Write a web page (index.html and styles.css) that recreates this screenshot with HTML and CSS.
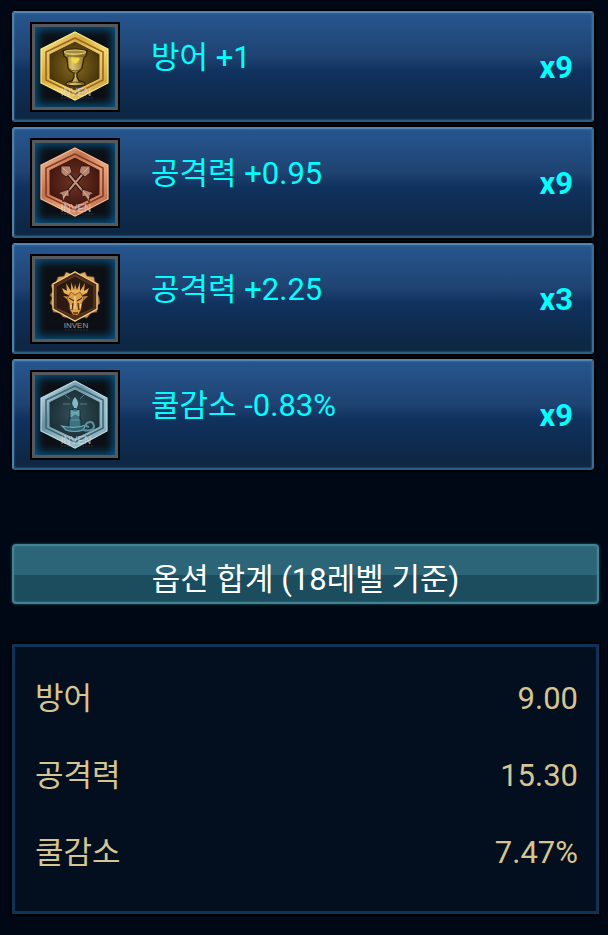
FILE: index.html
```
<!DOCTYPE html>
<html lang="ko">
<head>
    <meta charset="UTF-8">
    <meta name="viewport" content="width=device-width, initial-scale=1.0">
    <title>옵션 합계</title>
    <link rel="stylesheet" href="styles.css">
</head>
<body>

    <!-- shared gradients for the medals -->
    <svg class="defs" width="0" height="0" aria-hidden="true">
        <defs>
            <linearGradient id="gold" x1="0" y1="0" x2="1" y2="1">
                <stop offset="0" stop-color="#fff6a0"/>
                <stop offset=".35" stop-color="#d9a83c"/>
                <stop offset=".6" stop-color="#f3d86e"/>
                <stop offset="1" stop-color="#c08a2c"/>
            </linearGradient>
            <radialGradient id="gold-in">
                <stop offset="0" stop-color="#8a6a1c"/>
                <stop offset="1" stop-color="#4a360c"/>
            </radialGradient>
            <linearGradient id="cup" x1="0" x2="1">
                <stop offset="0" stop-color="#8f7426"/>
                <stop offset=".4" stop-color="#dcc56c"/>
                <stop offset="1" stop-color="#80641c"/>
            </linearGradient>
            <linearGradient id="copper" x1="0" y1="0" x2="1" y2="1">
                <stop offset="0" stop-color="#fbd0a4"/>
                <stop offset=".35" stop-color="#c4704c"/>
                <stop offset=".6" stop-color="#eba67c"/>
                <stop offset="1" stop-color="#b0583a"/>
            </linearGradient>
            <radialGradient id="copper-in">
                <stop offset="0" stop-color="#6e3424"/>
                <stop offset="1" stop-color="#44180f"/>
            </radialGradient>
            <linearGradient id="bronze" x1="0" y1="0" x2="0" y2="1">
                <stop offset="0" stop-color="#ecb56c"/>
                <stop offset=".5" stop-color="#a87540"/>
                <stop offset="1" stop-color="#c88a60"/>
            </linearGradient>
            <linearGradient id="dragon" x1="0" y1="0" x2="0" y2="1">
                <stop offset="0" stop-color="#b87828"/>
                <stop offset=".5" stop-color="#f0b758"/>
                <stop offset="1" stop-color="#b07438"/>
            </linearGradient>
            <linearGradient id="silver" x1="0" y1="0" x2="1" y2="1">
                <stop offset="0" stop-color="#d8f2f8"/>
                <stop offset=".35" stop-color="#6890a0"/>
                <stop offset=".6" stop-color="#a0c4d0"/>
                <stop offset="1" stop-color="#7ca4b4"/>
            </linearGradient>
            <radialGradient id="silver-in">
                <stop offset="0" stop-color="#35505a"/>
                <stop offset="1" stop-color="#1c3038"/>
            </radialGradient>
        </defs>
    </svg>

    <div class="container">
        <ul class="runes">
            <li class="rune">
                <div class="rune-img">
                    <svg viewBox="0 0 80 80" role="img" aria-label="방어">
                        <path d="M40 5L73 22V56L40 73L6 56V22Z" fill="url(#gold)"/>
                        <path d="M40 5L73 22V56L40 73L6 56V22Z" fill="none" stroke="#fbf08c" stroke-width="1.2"/>
                        <path d="M40 11L68 25V53L40 67L11 53V25Z" fill="none" stroke="#9a6820" stroke-width="1.6"/>
                        <path d="M40 14L65 27V52L40 64L14 52V27Z" fill="url(#gold-in)" stroke="#e8c45c"/>
                        <path d="M28 24Q40 20 52 24L51 29L49 31L47 41Q44 45 42 46V50L44 54Q51 55 50 58Q40 60 31 58Q30 55 37 54L39 50V46Q35 45 33 41L32 31L29 29Z" fill="url(#cup)" stroke="#33240a" stroke-width="1.4"/>
                        <ellipse cx="40" cy="25" rx="11" ry="2" fill="#a58b3e" stroke="#f0dc88" stroke-width=".8"/>
                        <path d="M32 29H49M34 42Q40 46 47 42M37 46H44M33 56Q40 54 48 56" fill="none" stroke="#5d4614"/>
                        <path d="M40 37Q34 33 37 31Q39 30 40 32Q42 30 44 31Q46 33 40 37Z" fill="#f6d944"/>
                        <text class="mark" x="41" y="69" text-anchor="middle">INVEN</text>
                        <path class="mark-line" d="M26 71H58"/>
                    </svg>
                </div>
                <p class="rune-name">방어 +1</p>
                <strong class="count">x9</strong>
            </li>
            <li class="rune">
                <div class="rune-img">
                    <svg viewBox="0 0 80 80" role="img" aria-label="공격력">
                        <path d="M40 5L73 22V56L40 73L6 56V22Z" fill="url(#copper)"/>
                        <path d="M40 5L73 22V56L40 73L6 56V22Z" fill="none" stroke="#f6bd94" stroke-width="1.2"/>
                        <path d="M40 11L68 25V53L40 67L11 53V25Z" fill="none" stroke="#853c28" stroke-width="1.6"/>
                        <path d="M40 14L65 27V52L40 64L14 52V27Z" fill="url(#copper-in)" stroke="#d48664"/>
                        <path d="M30 27L51 52M51 27L30 52" stroke="#240c08" stroke-width="4"/>
                        <path d="M30 27L51 52M51 27L30 52" stroke="#c09480" stroke-width="2"/>
                        <g fill="#b48470" stroke="#34120c" stroke-width=".8">
                            <path d="M26 23L35 23L37 29L31 34L26 30Z"/>
                            <path d="M55 23L46 23L44 29L50 34L55 30Z"/>
                            <path d="M34 46L34 54L31 53L28 59L27 52L23 50Z"/>
                            <path d="M47 46L47 54L50 53L54 59L55 52L59 50Z"/>
                        </g>
                        <path d="M28 25L33 30M53 25L48 30M33 48L28 55M48 48L54 55" stroke="#e0ac90"/>
                        <text class="mark" x="41" y="69" text-anchor="middle">INVEN</text>
                        <path class="mark-line" d="M26 71H58"/>
                    </svg>
                </div>
                <p class="rune-name">공격력 +0.95</p>
                <strong class="count">x9</strong>
            </li>
            <li class="rune">
                <div class="rune-img">
                    <svg viewBox="0 0 80 80" role="img" aria-label="공격력">
                        <path d="M40 12L44 15L50 13L52 17L59 18L60 23L64 25V32L62 34L64 38L65 44L62 47L62 53L56 54L52 59L46 58L40 63L34 59L28 58L25 54L18 53V48L15 44L17 39L15 36L18 32L16 26L21 23L23 18L29 17L31 13L36 15Z" fill="url(#bronze)" stroke="#65401f" stroke-width=".6"/>
                        <path d="M40 13L62 25V50L40 62L18 50V25Z" fill="#4a2c18" stroke="#f1ca82" stroke-width="1.4"/>
                        <path d="M40 17L59 27V49L40 58L21 49V27Z" fill="#2c1a12" stroke="#5d3a20" stroke-width="1.2"/>
                        <!-- horns, then the face over them -->
                        <path d="M37 38L29 34L27 29L32 32L31 24L36 32L36 23L39 31L40 25L42 31L45 23L45 32L50 24L49 32L54 29L52 34L44 38L53 37L48 42L34 42L28 37Z" fill="url(#dragon)"/>
                        <path d="M36 33L40 36L45 33L49 40L47 44L46 51L43 56H38L35 51L34 44L32 40Z" fill="#dba24c" stroke="#603612" stroke-width=".6"/>
                        <path d="M34 39L39 42M47 39L42 42M38 44L37 51M43 44L44 51M38 54H43" fill="none" stroke="#563010" stroke-width="1.4"/>
                        <path d="M40 37V50M36 46L36 50M46 45L45 49" stroke="#ffe09a"/>
                        <text class="mark small" x="41" y="69" text-anchor="middle">INVEN</text>
                        <path class="mark-line" d="M30 71H53"/>
                    </svg>
                </div>
                <p class="rune-name">공격력 +2.25</p>
                <strong class="count">x3</strong>
            </li>
            <li class="rune">
                <div class="rune-img">
                    <svg viewBox="0 0 80 80" role="img" aria-label="쿨감소">
                        <path d="M40 6L72 23V56L40 73L6 56V23Z" fill="url(#silver)"/>
                        <path d="M40 6L72 23V56L40 73L6 56V23Z" fill="none" stroke="#b8e0e8" stroke-width="1.2"/>
                        <path d="M40 11L68 25V53L40 67L11 53V25Z" fill="none" stroke="#3f6876" stroke-width="1.6"/>
                        <path d="M40 14L65 27V52L40 64L14 52V27Z" fill="url(#silver-in)" stroke="#7eaab6"/>
                        <path d="M30 20L35 24M49 20L45 24M28 29H35M45 29H52" stroke="#557f8a"/>
                        <path d="M40 22Q45 28 42 32V36H39V32Q35 28 40 22Z" fill="#80bcc8"/>
                        <path d="M35 35Q40 32 45 35V44H46V53H34V44H35Z" fill="#3c7280" stroke="#142b34"/>
                        <path d="M36 35Q40 39 44 35V41L40 39L36 42ZM36 45H44" fill="#6ca4b0" stroke="#6ca4b0" stroke-width=".8"/>
                        <path d="M27 51Q40 54 51 50L48 55Q40 58 31 55Z" fill="#2f6270" stroke="#70aab4" stroke-width="1.2"/>
                        <path d="M48 55Q59 57 59 51Q58 45 52 48Q49 51 54 52" fill="none" stroke="#5a909c" stroke-width="2"/>
                        <text class="mark" x="41" y="69" text-anchor="middle">INVEN</text>
                        <path class="mark-line" d="M26 71H58"/>
                    </svg>
                </div>
                <p class="rune-name">쿨감소 -0.83%</p>
                <strong class="count">x9</strong>
            </li>
        </ul>

        <h2 class="total-title">옵션 합계 (18레벨 기준)</h2>

        <dl class="total">
            <div class="total-item">
                <dt>방어</dt>
                <dd>9.00</dd>
            </div>
            <div class="total-item">
                <dt>공격력</dt>
                <dd>15.30</dd>
            </div>
            <div class="total-item">
                <dt>쿨감소</dt>
                <dd>7.47%</dd>
            </div>
        </dl>
    </div>

</body>
</html>
```
FILE: styles.css
```
*{
    margin: 0;
    padding: 0;
    box-sizing: border-box;
}

body{
    background-color: #000815;
    font-family: Roboto, "Noto Sans CJK KR", sans-serif;
    font-size: 31px;
    line-height: 40px;
}

.defs{
    position: absolute;
}

.container{
    padding: 11px 9px 20px 12px;
}

.runes{
    display: flex;
    flex-direction: column;
    gap: 5px;
    margin-right: 5px;
    list-style: none;
}

.rune{
    display: flex;
    align-items: flex-start;
    height: 111px;
    padding: 9px 19px 0 16px;
    color: #00ffff;
    border: 2px solid;
    border-color: #5484b4 #386f98 #295e80 #4c80aa;
    border-radius: 3px;
    background: linear-gradient(#26568f, #1f4372 40%, #10325f 54%, #0d2745 92%);
    box-shadow: 0 0 0 2px #000, inset 0 0 2px #4a86b4;
}

.rune-img{
    flex: none;
    width: 90px;
    height: 90px;
    margin-right: 31px;
    border: 2px solid #000;
    background-color: #0c0f14;
    box-shadow: inset 0 0 0 3px #55585c, inset 0 0 10px 5px #07588a;
    padding: 3px;
}

.rune-img svg{
    display: block;
    width: 80px;
    height: 80px;
}

.mark{
    fill: #e0dcd8;
    fill-opacity: .7;
    font-family: "Liberation Sans", sans-serif;
    font-size: 10px;
}

.small{
    font-size: 8px;
}

.mark-line{
    stroke: #77797c;
    stroke-opacity: .3;
    stroke-dasharray: 2 1;
}

.rune-name{
    flex: 1;
    margin-top: 16px;
}

.count{
    margin-top: 26px;
    font-weight: 700;
}

.total-title{
    height: 60px;
    margin-top: 74px;
    padding-top: 14px;
    text-align: center;
    font-size: 31px;
    font-weight: 400;
    color: #fff;
    border: 2px solid #438290;
    border-radius: 4px;
    background: linear-gradient(#2c6578 52%, #1b4d5f 52%);
    box-shadow: 0 0 2px 1px #0d343d, inset 0 0 2px #438290;
}

.total{
    display: flex;
    flex-direction: column;
    gap: 37px;
    height: 270px;
    margin-top: 40px;
    padding: 32px 18px 0 20px;
    color: #d5c591;
    border: 3px solid #0f3258;
    background-color: #030e1f;
    box-shadow: 0 0 0 2px #000;
}

.total-item{
    display: flex;
    justify-content: space-between;
}
```
